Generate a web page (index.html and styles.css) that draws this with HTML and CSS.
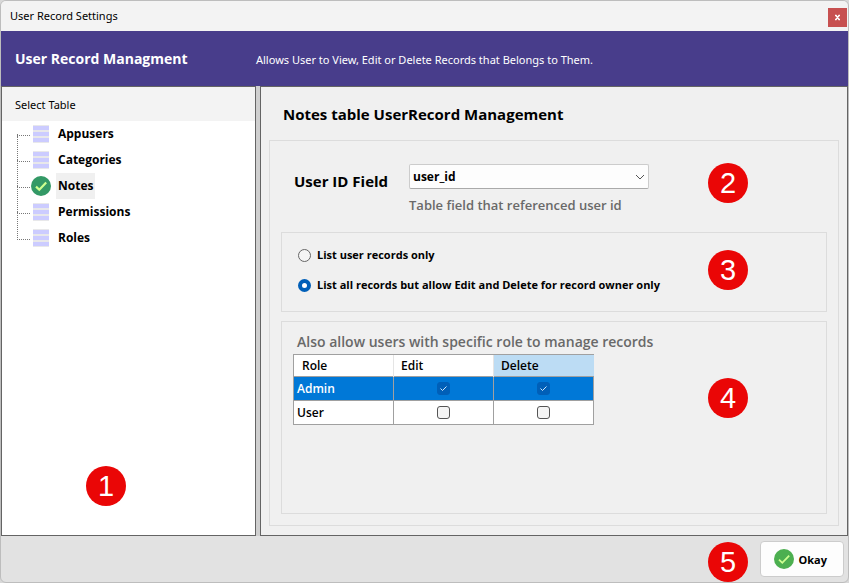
FILE: index.html
```html
<!DOCTYPE html>
<html lang="en">

<head>
    <meta charset="UTF-8">
    <meta name="viewport" content="width=device-width, initial-scale=1.0">
    <title>User Record Settings</title>
    <link rel="stylesheet" href="styles.css">
</head>

<body>
    <div class="window">
        <div class="titlebar">
            <span>User Record Settings</span>
            <button type="button" class="close" aria-label="Close">
                <svg width="7" height="7" viewBox="0 0 7 7"><path d="M1 1.5h1.5M4.5 1.5H6M1 5.5h1.5M4.5 5.5H6M2 1.5l3 4M5 1.5l-3 4" stroke="#fff" stroke-width="1.3" fill="none"/></svg>
            </button>
        </div>

        <header class="banner">
            <h1>User Record Managment</h1>
            <p>Allows User to View, Edit or Delete Records that Belongs to Them.</p>
        </header>

        <div class="content">
            <nav class="sidebar">
                <h2>Select Table</h2>
                <ul class="tree">
                    <li><svg class="icon" viewBox="0 0 20 20"><path fill="#e8e8ea" d="M2 1h16v18H2z"/><path fill="#ccccff" d="M2 2h16v4H2zM2 8h16v4H2zM2 14h16v4H2z"/></svg><a href="#">Appusers</a></li>
                    <li><svg class="icon" viewBox="0 0 20 20"><path fill="#e8e8ea" d="M2 1h16v18H2z"/><path fill="#ccccff" d="M2 2h16v4H2zM2 8h16v4H2zM2 14h16v4H2z"/></svg><a href="#">Categories</a></li>
                    <li><svg class="icon" viewBox="0 0 20 20"><circle cx="10" cy="10" r="10" fill="#339966"/><path d="M5 10.6l3.3 3.2L15.2 6.6" stroke="#ccff90" stroke-width="2.2" fill="none"/></svg><a href="#" class="selected">Notes</a></li>
                    <li><svg class="icon" viewBox="0 0 20 20"><path fill="#e8e8ea" d="M2 1h16v18H2z"/><path fill="#ccccff" d="M2 2h16v4H2zM2 8h16v4H2zM2 14h16v4H2z"/></svg><a href="#">Permissions</a></li>
                    <li><svg class="icon" viewBox="0 0 20 20"><path fill="#e8e8ea" d="M2 1h16v18H2z"/><path fill="#ccccff" d="M2 2h16v4H2zM2 8h16v4H2zM2 14h16v4H2z"/></svg><a href="#">Roles</a></li>
                </ul>
                <span class="badge badge-tables">1</span>
            </nav>

            <main class="panel">
                <h2>Notes table UserRecord Management</h2>
                <form class="group settings">
                    <div class="field">
                        <label for="userIdField">User ID Field</label>
                        <div class="field-input">
                            <div class="select">
                                <select id="userIdField" name="userIdField">
                                    <option>user_id</option>
                                </select>
                                <svg width="10" height="6" viewBox="0 0 10 6"><path d="M1 1l4 4 4-4" stroke="#555" fill="none"/></svg>
                            </div>
                            <p class="hint">Table field that referenced user id</p>
                        </div>
                    </div>
                    <span class="badge badge-field">2</span>

                    <div class="group access">
                        <label><input type="radio" name="access" value="own">List user records only</label>
                        <label><input type="radio" name="access" value="all" checked>List all records but allow Edit and Delete for record owner only</label>
                        <span class="badge badge-access">3</span>
                    </div>

                    <div class="group roles">
                        <h3 class="hint">Also allow users with specific role to manage records</h3>
                        <table>
                            <thead>
                                <tr><th>Role</th><th>Edit</th><th class="current">Delete</th></tr>
                            </thead>
                            <tbody>
                                <tr class="active">
                                    <td>Admin</td>
                                    <td><input type="checkbox" aria-label="Admin edit" checked></td>
                                    <td><input type="checkbox" aria-label="Admin delete" checked></td>
                                </tr>
                                <tr>
                                    <td>User</td>
                                    <td><input type="checkbox" aria-label="User edit"></td>
                                    <td><input type="checkbox" aria-label="User delete"></td>
                                </tr>
                            </tbody>
                        </table>
                        <span class="badge badge-roles">4</span>
                    </div>
                </form>
            </main>
        </div>

        <footer class="footer">
            <span class="badge badge-okay">5</span>
            <button type="button" class="okay">
                <svg class="icon" viewBox="0 0 20 20"><circle cx="10" cy="10" r="10" fill="#4caf50"/><path d="M5 10.6l3.3 3.2L15.2 6.6" stroke="#ccff90" stroke-width="1.8" fill="none"/></svg>
                Okay
            </button>
        </footer>
    </div>
</body>

</html>
```
FILE: styles.css
```css
* {
    box-sizing: border-box;
}

body {
    margin: 0;
    background-color: #d8d8d8;
    color: #000;
    font-family: "Noto Sans", "Open Sans", sans-serif;
    font-size: 11px;
    line-height: 16px;
}

h1, h2, h3, p, ul {
    margin: 0;
    padding: 0;
}

.window {
    display: flex;
    flex-direction: column;
    min-height: 100vh;
    border: 1px solid #bdbdbd;
    border-radius: 6px;
    background-color: #e2e2e2;
    overflow: hidden;
}

.titlebar {
    display: flex;
    align-items: center;
    justify-content: space-between;
    height: 30px;
    padding: 0 1px 0 9px;
    background-color: #f3f3f3;
}

.close {
    display: flex;
    align-items: center;
    justify-content: center;
    width: 19px;
    height: 19px;
    margin-top: 3px;
    padding: 0;
    border: none;
    background-color: #c75050;
}

.banner {
    display: grid;
    grid-template-columns: 241px 1fr;
    align-items: center;
    height: 55px;
    padding-left: 14px;
    background-color: #483d8b;
    color: #fff;
}

.banner h1 {
    font: bold 14px/16px "Open Sans", sans-serif;
}

.banner p {
    padding-top: 2px;
}

.content {
    flex: 1;
    display: grid;
    grid-template-columns: 255px 1fr;
    gap: 4px;
    background-color: #cfcfcf;
}

.sidebar {
    position: relative;
    border: 1px solid #646464;
    background-color: #fff;
}

.sidebar h2 {
    padding: 10px 13px 8px;
    background-color: #f3f3f3;
    font-size: 11px;
    font-weight: normal;
}

.tree {
    list-style: none;
    padding-left: 15px;
}

/* dotted connectors: one vertical stem per row and a branch to the icon */
.tree li {
    position: relative;
    display: flex;
    align-items: center;
    height: 26px;
    padding-left: 14px;
}

.tree li::before {
    content: "";
    position: absolute;
    left: 0;
    top: -13px;
    width: 12px;
    height: 27px;
    border-left: 1px dotted #777;
    border-bottom: 1px dotted #777;
}

.tree li:first-child::before {
    top: 13px;
    height: 1px;
}

.icon {
    width: 20px;
    height: 20px;
}

.tree a {
    margin-left: 5px;
    padding: 5px 2px;
    color: #000;
    font: bold 12px/16px "Open Sans", sans-serif;
    text-decoration: none;
}

.tree .selected {
    background-color: #f0f0f0;
}

.panel {
    display: flex;
    flex-direction: column;
    padding: 17px 8px 9px;
    border: 1px solid #646464;
    background-color: #f0f0f0;
    font-family: "Open Sans", sans-serif;
}

.panel h2 {
    padding-left: 14px;
    font-size: 15px;
    font-weight: bold;
    line-height: 20px;
}

.group {
    position: relative;
    border: 1px solid #dcdcdc;
}

.settings {
    flex: 1;
    display: flex;
    flex-direction: column;
    gap: 9px;
    margin-top: 16px;
    padding: 23px 11px 11px;
}

.field {
    display: flex;
    margin-bottom: 10px;
    padding-left: 13px;
}

.field label {
    width: 115px;
    padding-top: 7px;
    font-size: 15px;
    font-weight: bold;
    line-height: 20px;
}

.select {
    position: relative;
    width: 240px;
}

.select select {
    display: block;
    appearance: none;
    width: 100%;
    height: 25px;
    padding: 0 3px;
    border: 1px solid #ccc;
    border-bottom-color: #aaa;
    border-radius: 2px;
    background-color: #fdfdfd;
    color: #000;
    font: bold 12px "Open Sans", sans-serif;
}

.select svg {
    position: absolute;
    right: 4px;
    top: 10px;
    pointer-events: none;
}

.hint {
    color: #696969;
    font-size: 13px;
    font-weight: 600;
}

.field .hint {
    padding-top: 8px;
}

.access {
    display: flex;
    flex-direction: column;
    gap: 14px;
    height: 80px;
    padding: 14px 16px;
}

.access label {
    display: flex;
    align-items: center;
    gap: 6px;
    font-weight: bold;
}

input[type="radio"] {
    appearance: none;
    width: 13px;
    height: 13px;
    margin: 0;
    border: 1px solid #666;
    border-radius: 50%;
    background-color: #f5f5f5;
}

input[type="radio"]:checked {
    border: 4px solid #005fb8;
    background-color: #fff;
}

.roles {
    flex: 1;
    padding: 12px 11px;
}

.roles h3 {
    padding-left: 4px;
    font-size: 14px;
}

table {
    width: 301px;
    margin-top: 4px;
    table-layout: fixed;
    border-collapse: collapse;
    background-color: #fff;
    font-size: 12px;
    font-weight: 600;
}

th {
    height: 22px;
    padding: 0 7px;
    border-top: 1px solid #a0a0a0;
    border-left: 1px solid #e5e5e5;
    font-weight: 600;
    text-align: left;
}

th:first-child {
    padding-left: 8px;
    border-left-color: #a0a0a0;
}

.current {
    background-color: #bcdcf4;
}

td {
    height: 24px;
    padding: 0 3px;
    border: 1px solid #a0a0a0;
}

td + td {
    text-align: center;
}

.active {
    background-color: #0078d7;
    color: #fff;
}

input[type="checkbox"] {
    appearance: none;
    display: block;
    width: 13px;
    height: 13px;
    margin: 0 auto;
    border: 1px solid #555;
    border-radius: 3px;
    background-color: #f5f5f5;
}

input[type="checkbox"]:checked {
    border-color: #005fb8;
    background: #005fb8 url("data:image/svg+xml,%3Csvg xmlns='http://www.w3.org/2000/svg' viewBox='0 0 11 11'%3E%3Cpath d='M2.5 5.5l2 2 4-4' stroke='%23cfe4f7' fill='none'/%3E%3C/svg%3E");
}

.footer {
    position: relative;
    display: flex;
    justify-content: flex-end;
    padding: 5px 4px;
}

.okay {
    display: flex;
    align-items: center;
    gap: 5px;
    height: 36px;
    padding: 0 16px 0 13px;
    border: 1px solid #ccc;
    border-radius: 4px;
    background-color: #fdfdfd;
    color: #000;
    font: bold 11px "Open Sans", sans-serif;
}

.badge {
    position: absolute;
    width: 40px;
    height: 40px;
    border-radius: 50%;
    background-color: #ea0606;
    color: #fff;
    font: 29px/41px "Liberation Sans", sans-serif;
    text-align: center;
}

.badge-tables {
    left: 84px;
    bottom: 29px;
}

.badge-field {
    right: 90px;
    top: 22px;
}

.badge-access {
    right: 78px;
    top: 17px;
}

.badge-roles {
    right: 78px;
    top: 56px;
}

.badge-okay {
    right: 100px;
    top: 6px;
}
```
